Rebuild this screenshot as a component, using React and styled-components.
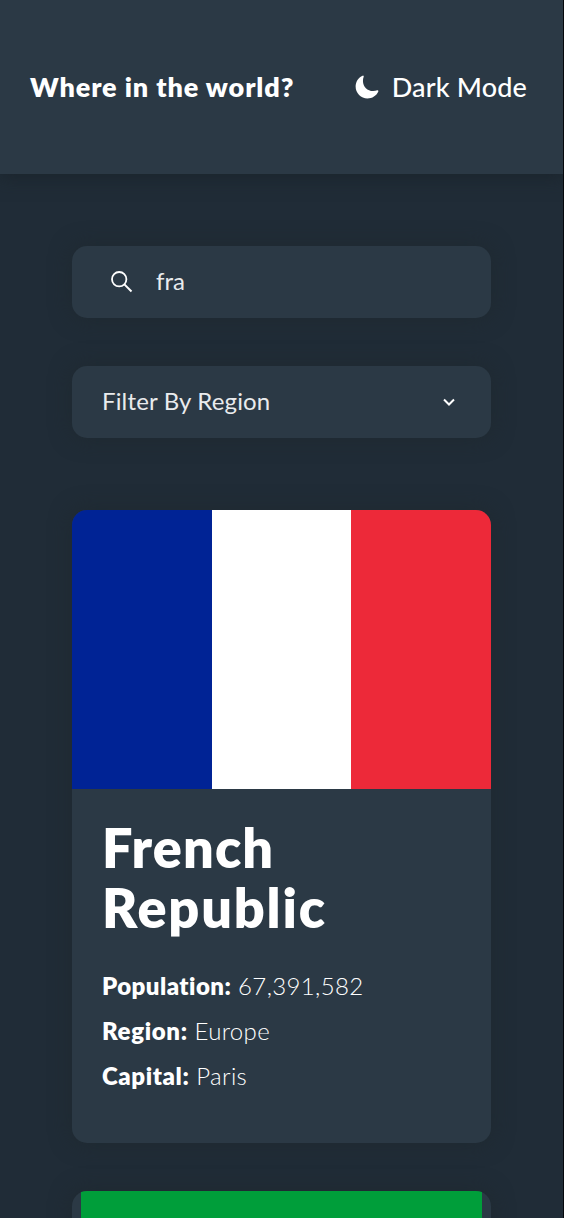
import React from "react";
import styled, { createGlobalStyle } from "styled-components";
import { IoMoon } from "react-icons/io5";

const GlobalStyle = createGlobalStyle`
  * { box-sizing: border-box; }
  html, body { margin: 0; padding: 0; }
  body {
    height: 100vh;
    overflow: hidden;
    background: #202c37;
    color: #fff;
    font-family: Lato, "Open Sans", sans-serif;
    font-variant-ligatures: none;
  }
  h1, h2, p { margin: 0; }
`;

const Page = styled.div`
  height: 1218px;
  overflow: hidden;
  border-right: 1px solid #05080c;
`;

const Header = styled.header`
  display: flex;
  align-items: center;
  justify-content: space-between;
  height: 174px;
  padding: 0 36px 0 30px;
  background: #2b3945;
  box-shadow: 0 4px 16px rgba(25, 35, 42, 0.75);
`;

const Title = styled.h1`
  padding-bottom: 1px;
  font-size: 27px;
  line-height: 36px;
  font-weight: 800;
  letter-spacing: 0.9px;
  white-space: nowrap;
`;

const ModeToggle = styled.div`
  display: flex;
  align-items: center;
  gap: 12px;
  font-size: 27px;
  line-height: 36px;
  font-weight: 500;
  letter-spacing: 0.15px;
  white-space: nowrap;
`;

const ModeLabel = styled.span`
  padding-bottom: 1px;
`;

const Main = styled.main`
  display: flex;
  flex-direction: column;
  padding: 72px 72px 0;
`;

const Field = styled.div`
  display: flex;
  align-items: center;
  height: 72px;
  margin-bottom: 48px;
  padding: 0 35px 0 ${(p) => p.$inset};
  border-radius: 15px;
  background: #2b3945;
  box-shadow: 0 0 20px 2px rgba(31, 41, 48, 0.8);
`;

const FieldText = styled.span`
  padding-bottom: 2px;
  font-size: 24px;
  line-height: 32px;
  font-weight: 400;
  letter-spacing: ${(p) => p.$tracking || "0"};
  color: #e9ebed;
`;

const SearchIcon = styled.svg`
  width: 24px;
  height: 24px;
  margin-right: 22px;
`;

const Chevron = styled.svg`
  width: 14px;
  height: 10px;
  margin-left: auto;
`;

const Cards = styled.section`
  display: flex;
  flex-direction: column;
  gap: 48px;
  padding-top: 24px;
`;

const Card = styled.article`
  flex: none;
  height: 633px;
  border-radius: 15px;
  overflow: hidden;
  background: #2b3945;
  box-shadow: 0 0 20px 2px rgba(31, 41, 48, 0.8);
`;

const Flag = styled.div`
  display: flex;
  height: 279px;
  padding: 0 ${(p) => p.$inset || "0"};
`;

const Stripe = styled.div`
  flex: 1;
  background: ${(p) => p.$color};
`;

const CardBody = styled.div`
  padding: 29px 30px 0;
`;

const CountryName = styled.h2`
  display: flex;
  flex-direction: column;
  margin-bottom: 25px;
  font-size: 54px;
  line-height: 60px;
  font-weight: 800;
`;

const NameLine = styled.span`
  letter-spacing: ${(p) => p.$tracking};
`;

const Fact = styled.p`
  height: 45px;
  font-size: 24px;
  line-height: 45px;
  font-weight: 300;
  letter-spacing: 0.35px;
`;

const Label = styled.strong`
  font-weight: 800;
  letter-spacing: ${(p) => p.$tracking};
`;

export default function App() {
  return (
    <Page>
      <GlobalStyle />
      <Header>
        <Title>Where in the world?</Title>
        <ModeToggle>
          <IoMoon size={26} />
          <ModeLabel>Dark Mode</ModeLabel>
        </ModeToggle>
      </Header>
      <Main>
        <Field $inset="38px">
          <SearchIcon viewBox="0 0 24 24" fill="none" stroke="#fff" strokeWidth="1.8">
            <circle cx="9.2" cy="9.2" r="7.2" />
            <path d="M14.4 14.4 L21.5 21.5" strokeWidth="2" />
          </SearchIcon>
          <FieldText>fra</FieldText>
        </Field>
        <Field $inset="30px">
          <FieldText $tracking="0.16px">Filter By Region</FieldText>
          <Chevron viewBox="0 0 14 10" fill="none" stroke="#fff" strokeWidth="2">
            <path d="M2 2.5 L7 7.5 L12 2.5" />
          </Chevron>
        </Field>
        <Cards>
          <Card>
            <Flag>
              <Stripe $color="#002395" />
              <Stripe $color="#fff" />
              <Stripe $color="#ed2939" />
            </Flag>
            <CardBody>
              <CountryName>
                <NameLine $tracking="1.1px">French</NameLine>
                <NameLine $tracking="1.8px">Republic</NameLine>
              </CountryName>
              <Fact><Label $tracking="0.45px">Population:</Label> 67,391,582</Fact>
              <Fact><Label $tracking="0.65px">Region:</Label> Europe</Fact>
              <Fact><Label $tracking="0.6px">Capital:</Label> Paris</Fact>
            </CardBody>
          </Card>
          <Card>
            <Flag $inset="9.4px">
              <Stripe $color="#009e3a" />
            </Flag>
          </Card>
        </Cards>
      </Main>
    </Page>
  );
}
